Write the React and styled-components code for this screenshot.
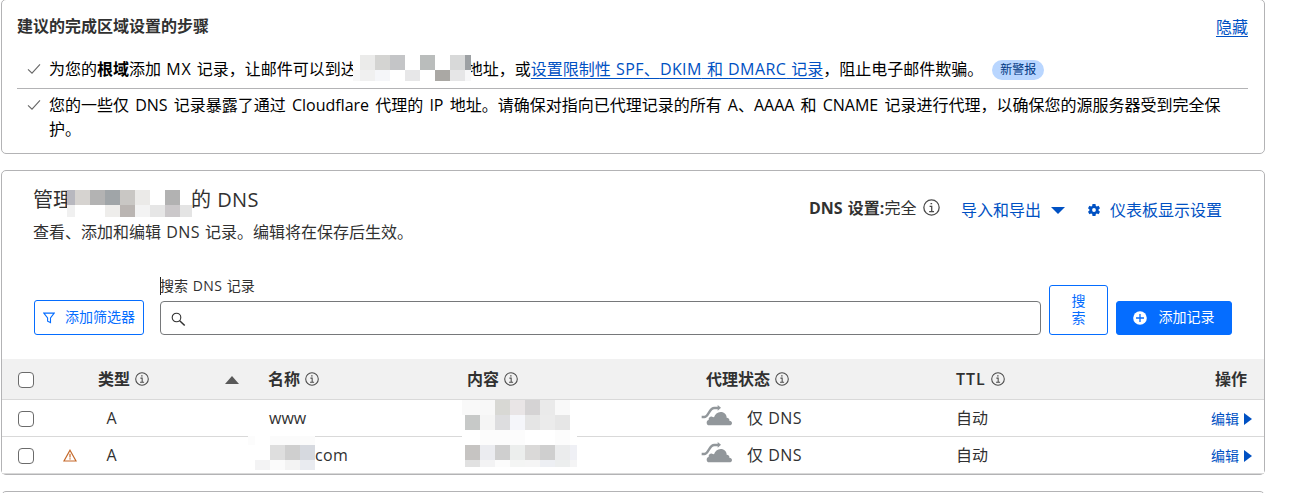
import React from "react";
import styled, { createGlobalStyle } from "styled-components";

const GlobalStyle = createGlobalStyle`
  * { box-sizing: border-box; }
  body {
    margin: 0;
    background: #fff;
    color: #313131;
    font: 16px/24px "Open Sans", "Noto Sans CJK SC", sans-serif;
    word-spacing: 1px;
  }
`;

const Page = styled.main`
  display: flex;
  flex-direction: column;
  width: 1265px;
  height: 493px;
  overflow: hidden;
  padding-left: 1px;
`;

const Panel = styled.section`
  flex: none;
  border: 1px solid #b3b3b5;
  border-radius: 5px;
  margin-bottom: 16px;
  width: 1264px;
`;

const StepsPanel = styled(Panel)`
  height: 155px;
  margin-top: -1px;
  padding: 15px 16px 0 15px;
`;

const StepsHead = styled.div`
  display: flex;
  justify-content: space-between;
  height: 42px;
`;

const StepsTitle = styled.h2`
  margin: -1px 0 0;
  font-size: 16px;
  font-weight: 600;
`;

const Link = styled.a`
  color: #0051c3;
  text-decoration: underline 1px;
  text-underline-offset: 3px;
  text-decoration-skip-ink: none;
`;

const Step = styled.div`
  display: flex;
  color: #000;
  height: ${(p) => p.$h || "auto"};
  padding: ${(p) => p.$pad || "0"};
  border-bottom: ${(p) => (p.$line ? "1px solid #b3b3b5" : "none")};
`;

const TickSlot = styled.span`
  flex: none;
  width: 32px;
  padding: 6px 0 0 10px;
  line-height: 0;
`;

const StepText = styled.div`
  flex: 1;
  white-space: ${(p) => (p.$nowrap ? "nowrap" : "normal")};
  word-spacing: ${(p) => (p.$nowrap ? 1 : 2)}px;
`;

const Latin = styled.span`
  letter-spacing: ${(p) => p.$by || 0.4}px;
`;

const Badge = styled.span`
  display: inline-block;
  margin: -4px 0 -4px 9px;
  width: 52px;
  height: 20px;
  border-radius: 10px;
  background: #b9d6ff;
  color: #003681;
  font-size: 12px;
  line-height: 19px;
  text-align: center;
  vertical-align: 1px;
`;

const Gap = styled.span`
  display: inline-block;
  position: relative;
  width: ${(p) => p.$w}px;
  height: 1px;
`;

const Tiles = styled.span`
  position: absolute;
  z-index: 1;
  left: ${(p) => p.$x}px;
  top: ${(p) => p.$y}px;
  display: grid;
  grid-template-columns: ${(p) => p.$cols.map((c) => c + "px").join(" ")};
  grid-template-rows: ${(p) => p.$rows.map((c) => c + "px").join(" ")};
`;

const Tile = styled.span`
  background: ${(p) => p.$c};
`;

function Mosaic({ x, y, cols, rows, cells }) {
  return (
    <Tiles $x={x} $y={y} $cols={cols} $rows={rows}>
      {cells.split(/\s+/).map((c, i) => (
        <Tile key={i} $c={c === "." ? "#fff" : c === "-" ? "transparent" : "#" + c} />
      ))}
    </Tiles>
  );
}

const DnsPanel = styled(Panel)`
  height: 305px;
`;

const Head = styled.div`
  display: flex;
  justify-content: space-between;
  height: 114px;
  padding: 15px 42px 0 31px;
`;

const Title = styled.h1`
  margin: 0;
  font-size: 20px;
  font-weight: 400;
  line-height: 28px;
`;

const Sub = styled.p`
  margin: 4px 0 0;
  line-height: 28px;
`;

const Tools = styled.div`
  display: flex;
  align-items: flex-start;
  white-space: nowrap;
`;

const Setting = styled.div`
  display: flex;
  align-items: center;
  padding-top: 10px;
  width: 152px;
  svg { margin-left: 7px; margin-top: -2px; }
`;

const ToolLink = styled.div`
  display: flex;
  align-items: center;
  gap: ${(p) => p.$gap}px;
  width: ${(p) => p.$w}px;
  padding-top: 12px;
  color: #0051c3;
`;

const SearchBar = styled.div`
  display: flex;
  align-items: flex-end;
  height: 50px;
  padding: 0 31px 0 32px;
`;

const Button = styled.button`
  display: flex;
  align-items: center;
  justify-content: center;
  gap: ${(p) => p.$gap || 0}px;
  width: ${(p) => p.$w}px;
  height: ${(p) => p.$h}px;
  margin-left: ${(p) => p.$ml || 0}px;
  padding: ${(p) => (p.$solid ? "0 1px 3px 0" : "0 0 2px 0")};
  border: 1px solid #056dff;
  border-radius: 3px;
  background: ${(p) => (p.$solid ? "#056dff" : "#fff")};
  color: ${(p) => (p.$solid ? "#fff" : "#056dff")};
  font: 14px/17px "Open Sans", "Noto Sans CJK SC", sans-serif;
  white-space: nowrap;
  svg { position: relative; top: 1px; }
`;

const Field = styled.label`
  display: flex;
  flex-direction: column;
  width: 881px;
  margin-left: 16px;
`;

const FieldName = styled.span`
  height: 18px;
  margin-bottom: 6px;
  border-left: 1px solid #222;
  font-size: 14px;
  line-height: 17px;
  text-indent: -1px;
`;

const Input = styled.span`
  display: flex;
  align-items: center;
  height: 34px;
  padding: 3px 0 0 10px;
  border: 1px solid #76787a;
  border-radius: 4px;
`;

const Table = styled.div`
  margin-top: 24px;
`;

const Row = styled.div`
  position: relative;
  display: grid;
  grid-template-columns: 61px 35px 170px 199px 239px 250px 1fr;
  align-items: center;
  height: ${(p) => (p.$head ? 41 : 37)}px;
  padding-right: ${(p) => (p.$head ? 17 : 12)}px;
  border-bottom: 1px solid #d9d9d9;
  background: ${(p) => (p.$head ? "#f1f1f1" : "#fff")};
  font-weight: ${(p) => (p.$head ? 600 : 400)};
`;

const Cell = styled.div`
  display: flex;
  align-items: center;
  gap: ${(p) => p.$gap ?? 5}px;
  padding-left: ${(p) => p.$pl || 0}px;
  white-space: nowrap;
`;

const Check = styled.span`
  width: 16px;
  height: 16px;
  margin: 1px 0 0 16px;
  border: 1px solid #6b6b6b;
  border-radius: 4px;
  background: #fff;
`;

const Sort = styled.span`
  margin-left: auto;
  padding: 1px 29px 0 0;
  line-height: 0;
`;

const Edit = styled.a`
  display: flex;
  align-items: center;
  gap: 5px;
  padding-top: 1px;
  color: #0051c3;
  font-size: 14px;
`;

const CloudSlot = styled.span`
  margin-left: -5px;
  padding-bottom: 5px;
  line-height: 0;
`;

const RowTail = styled.div`
  display: flex;
  justify-content: space-between;
  align-items: center;
`;

const MaskedName = styled.span`
  padding-left: 46px;
`;

const NextPanel = styled(Panel)`
  height: 40px;
  margin: 0;
`;

const Info = ({ size = 14 }) => (
  <svg width={size} height={size} viewBox="0 0 16 16" fill="none" stroke="#4a4a4a" strokeWidth="1.2">
    <circle cx="8" cy="8" r="7.2" />
    <path d="M6.2 7h2v4.7M5.8 11.8h4.6M7.1 4.4h1.5" />
  </svg>
);

const Tick = () => (
  <svg width="14" height="12" viewBox="0 0 14 12" fill="none" stroke="#666" strokeWidth="1.1">
    <path d="M1 6.3 5 10.2 13 1.4" />
  </svg>
);

const Funnel = () => (
  <svg width="12" height="12" viewBox="0 0 12 12" fill="none" stroke="#056dff" strokeWidth="1.1">
    <path d="M.8 1.1h10.4L7.5 6v4.6L4.6 9.2V6z" />
  </svg>
);

const Gear = () => (
  <svg width="12" height="12" viewBox="0 0 24 24" fill="#0051c3">
    <path
      fillRule="evenodd"
      d="M9 0h6l.7 3.8 2 1.1 3.5-1.4 2.8 5-2.9 2.4v2.2l2.9 2.4-2.8 5-3.5-1.4-2 1.1L15 24H9l-.7-3.8-2-1.1-3.5 1.4-2.8-5 2.9-2.4v-2.2L0 8.5l2.8-5 3.5 1.4 2-1.1zM12 8.2a3.8 3.8 0 1 0 0 7.6 3.8 3.8 0 0 0 0-7.6z"
    />
  </svg>
);

const Cloud = () => (
  <svg width="32" height="21" viewBox="0 0 96 63" fill="#92979b">
    <path d="M25 61c-5 0-8-3-8-8 0-4 2-7 6-8-1-6 4-11 10-10 2 0 4 1 6 2 3-9 10-16 20-16 11 0 18 8 18 17 6 0 9 4 8 9 5 0 8 3 8 7s-3 7-8 7z" />
    <path d="M2 36h8C23 36 24 9 40 9h13" fill="none" stroke="#92979b" strokeWidth="7" />
    <path d="M50 0 60 8.5 50 17z" />
  </svg>
);

const Warning = () => (
  <svg width="14" height="13" viewBox="0 0 14 13" fill="none" stroke="#c5692a" strokeWidth="1.2">
    <path d="M7 1.2 13 12H1zM7 4.8v3.6M7 9.2v1.3" />
  </svg>
);

const Triangle = ({ w, h, d, c }) => (
  <svg width={w} height={h} viewBox={`0 0 ${w} ${h}`}>
    <path d={d} fill={c} />
  </svg>
);

const HeadCell = ({ children }) => (
  <Cell>
    {children}
    <Info />
  </Cell>
);

function Record({ warn, name, overlay }) {
  return (
    <Row>
      <Check />
      <Cell>{warn && <Warning />}</Cell>
      <Cell $pl={8.5}>A</Cell>
      <Cell $pl={1}>{name}</Cell>
      <Cell />
      <Cell $gap={14}>
        <CloudSlot><Cloud /></CloudSlot>
        <span>仅 <Latin $by={0.5}>DNS</Latin></span>
      </Cell>
      <RowTail>
        自动
        <Edit>
          编辑
          <Triangle w={8} h={12} d="M0 0 8 6 0 12z" c="#0051c3" />
        </Edit>
      </RowTail>
      {overlay}
    </Row>
  );
}

export default function App() {
  return (
    <>
      <GlobalStyle />
      <Page>
        <StepsPanel>
          <StepsHead>
            <StepsTitle>建议的完成区域设置的步骤</StepsTitle>
            <Link>隐藏</Link>
          </StepsHead>
          <Step $line $h="32px">
            <TickSlot><Tick /></TickSlot>
            <StepText $nowrap>
              为您的<b>根域</b>添加 <Latin $by={0.9}>MX</Latin> 记录，让邮件可以到达
              <Gap $w={110}>
                <Mosaic
                  x={-4} y={-19}
                  cols={[7, 15, 15, 15, 15, 15, 15, 15, 6]} rows={[15, 11]}
                  cells=". ebebea d4d4d2 c4c5c7 . babdbc . d8d9d9 9da1a4 f7f7f7 f0f0f0 f5f6f9 . e7e7e8 . aaa8a4 e6e6e7 f7f7f8"
                />
              </Gap>
              地址，或<Link>设置限制性 <Latin>SPF</Latin>、<Latin>DKIM</Latin> 和 <Latin>DMARC</Latin> 记录</Link>，阻止电子邮件欺骗。
              <Badge>新警报</Badge>
            </StepText>
          </Step>
          <Step $pad="4px 22px 0 0">
            <TickSlot><Tick /></TickSlot>
            <StepText>
              您的一些仅 DNS 记录暴露了通过 Cloudflare 代理的 IP 地址。请确保对指向已代理记录的所有 A、AAAA 和 CNAME 记录进行代理，以确保您的源服务器受到完全保护。
            </StepText>
          </Step>
        </StepsPanel>

        <DnsPanel>
          <Head>
            <div>
              <Title>
                管理
                <Gap $w={118}>
                  <Mosaic
                    x={-6} y={-16}
                    cols={[8, 15, 15, 15, 15, 15, 15, 15, 12]} rows={[15, 12]}
                    cells="b8b8bf d6d3d0 b3b3b3 a0a5a8 c9c7c4 ebeae8 . b2b2b2 . f0f0f0 . . eeedeb bab5b2 f3f3f3 e6e6e6 cbc8ca e4e4e4"
                  />
                </Gap>
                的 <Latin>DNS</Latin>
              </Title>
              <Sub>查看、添加和编辑 <Latin>DNS</Latin> 记录。编辑将在保存后生效。</Sub>
            </div>
            <Tools>
              <Setting>
                <b>DNS 设置:</b>完全<Info size={17} />
              </Setting>
              <ToolLink $gap={10} $w={127}>
                导入和导出
                <Triangle w={14} h={7} d="M0 0h14L7 7z" c="#0051c3" />
              </ToolLink>
              <ToolLink $gap={10} $w={134}>
                <Gear />
                仪表板显示设置
              </ToolLink>
            </Tools>
          </Head>
          <SearchBar>
            <Button $w={110} $h={35} $gap={10}><Funnel />添加筛选器</Button>
            <Field>
              <FieldName>搜索 <Latin>DNS</Latin> 记录</FieldName>
              <Input>
                <svg width="15" height="15" viewBox="0 0 15 15" fill="none" stroke="#313131" strokeWidth="1.1">
                  <circle cx="5.5" cy="5.5" r="4.3" />
                  <path d="m8.7 8.7 5 4.8" strokeWidth="1.5" />
                </svg>
              </Input>
            </Field>
            <Button $w={59} $h={50} $ml={8}>搜<br />索</Button>
            <Button $solid $w={116} $h={34} $ml={8} $gap={12}>
              <svg width="14" height="14" viewBox="0 0 14 14">
                <circle cx="7" cy="7" r="6.8" fill="#fff" />
                <path d="M7 3v8M3 7h8" stroke="#056dff" strokeWidth="1.3" />
              </svg>
              添加记录
            </Button>
          </SearchBar>
          <Table>
            <Row $head>
              <Check />
              <span />
              <Cell>
                类型
                <Info />
                <Sort><Triangle w={14} h={8} d="M7 0l7 8H0z" c="#595959" /></Sort>
              </Cell>
              <HeadCell>名称</HeadCell>
              <HeadCell>内容</HeadCell>
              <HeadCell>代理状态</HeadCell>
              <RowTail>
                <HeadCell><Latin $by={1}>TTL</Latin></HeadCell>
                操作
              </RowTail>
            </Row>
            <Record
              name="www"
              overlay={
                <Mosaic
                  x={460} y={0}
                  cols={[3, 15, 15, 15, 15, 15, 15, 15, 7]} rows={[15, 15, 15, 15, 7]}
                  cells="f9f9f9 f9f9f9 f8f8f8 d8d8d4 e9e5e6 d5d3d4 eaeaea f9f9f9 - . c7c9c8 f5f5f5 dddddf f5f6fa e5e5e5 ebebeb e6e6e6 - . . fcfcfc fcfcfc fcfcfc . . fcfcfc . . c6c4c2 ebecf0 cfcfcf eceeed dad9d8 cfcfcf ebeced eff0f5 . e1e1e1 f3f3f4 fcfcfc f4f5f4 f5f5f5 edeff3 eceeee f4f4f5"
                />
              }
            />
            <Record
              warn
              name={<MaskedName><Latin>com</Latin></MaskedName>}
              overlay={
                <Mosaic
                  x={246} y={-1}
                  cols={[7, 15, 15, 15, 15]} rows={[9, 15, 10]}
                  cells="fcfcfc . fbfbfb fbfbfb fbfbfb . . dedede cfcfcf d6d9df . f3f3f4 fbfbfb f3f3f3 e9ebf0"
                />
              }
            />
          </Table>
        </DnsPanel>
        <NextPanel />
      </Page>
    </>
  );
}
